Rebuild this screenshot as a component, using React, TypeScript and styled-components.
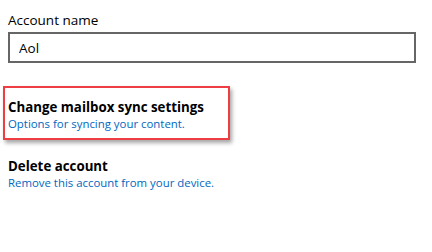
import styled, { createGlobalStyle } from "styled-components";

const GlobalStyle = createGlobalStyle`
  body {
    margin: 0;
    background: #ffffff;
    font-family: "Open Sans", "Noto Sans", sans-serif;
  }
`;

export default function App() {
  return (
    <>
      <GlobalStyle />
      <S.Page>
        <S.Field>
          <S.Label>Account name</S.Label>
          <S.Input readOnly value="Aol" />
        </S.Field>
        <S.Highlight>
          <S.Option>
            <S.Title>Change mailbox sync settings</S.Title>
            <S.Link>Options for syncing your content.</S.Link>
          </S.Option>
        </S.Highlight>
        <S.Option $spaced>
          <S.Title>Delete account</S.Title>
          <S.Link>Remove this account from your device.</S.Link>
        </S.Option>
      </S.Page>
    </>
  );
}

const S = {
  Page: styled.div`
    width: 432px;
    height: 252px;
    box-sizing: border-box;
    padding: 11px 16px 0 8px;
    display: flex;
    flex-direction: column;
  `,
  Field: styled.div`
    display: flex;
    flex-direction: column;
    gap: 3px;
  `,
  Label: styled.div`
    font-size: 13.5px;
    line-height: 18px;
    color: #000000;
  `,
  Input: styled.input`
    width: 408px;
    height: 31px;
    box-sizing: border-box;
    margin: 0;
    padding: 0 0 0 9px;
    border: 2px solid #666666;
    font-family: inherit;
    font-size: 13.5px;
    color: #000000;
    outline: none;
  `,
  Highlight: styled.div`
    margin: 23px 0 0 -5px;
    width: 227px;
    height: 54px;
    box-sizing: border-box;
    border: 2px solid #ee3e44;
    box-shadow: 2px 3px 4px rgba(0, 0, 0, 0.35);
    padding: 11px 0 0 3px;
  `,
  Option: styled.div<{ $spaced?: boolean }>`
    display: flex;
    flex-direction: column;
    margin-top: ${({ $spaced }) => ($spaced ? "18px" : "0")};
  `,
  Title: styled.div`
    font-size: 13.3px;
    line-height: 17px;
    font-weight: 700;
    color: #000000;
  `,
  Link: styled.div`
    font-size: 11.4px;
    line-height: 16px;
    color: #0067c0;
  `,
};
